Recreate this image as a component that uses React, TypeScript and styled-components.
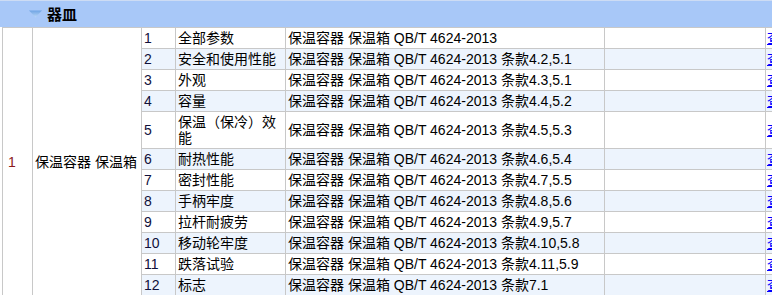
import React from 'react';
import styled, { createGlobalStyle } from 'styled-components';

const GlobalStyle = createGlobalStyle`
  html, body {
    margin: 0;
    padding: 0;
    overflow: hidden;
    background: #ffffff;
  }
  body {
    font-family: "Liberation Sans", "Noto Sans CJK SC", sans-serif;
    font-size: 14px;
    color: #000;
  }
`;

interface Item {
  no: number;
  name: string;
  clause?: string;
}

const items: Item[] = [
  { no: 1, name: '全部参数' },
  { no: 2, name: '安全和使用性能', clause: '4.2,5.1' },
  { no: 3, name: '外观', clause: '4.3,5.1' },
  { no: 4, name: '容量', clause: '4.4,5.2' },
  { no: 5, name: '保温（保冷）效能', clause: '4.5,5.3' },
  { no: 6, name: '耐热性能', clause: '4.6,5.4' },
  { no: 7, name: '密封性能', clause: '4.7,5.5' },
  { no: 8, name: '手柄牢度', clause: '4.8,5.6' },
  { no: 9, name: '拉杆耐疲劳', clause: '4.9,5.7' },
  { no: 10, name: '移动轮牢度', clause: '4.10,5.8' },
  { no: 11, name: '跌落试验', clause: '4.11,5.9' },
  { no: 12, name: '标志', clause: '7.1' },
];

// column widths, left to right
const columns = [30, 109, 34, 110, 319, 161, 60];

const product = '保温容器 保温箱';
const standard = 'QB/T 4624-2013';

const Page = styled.div`
  width: 772px;
  height: 295px;
  overflow: hidden;
`;

const GroupHeader = styled.div`
  height: 26px;
  border-top: 1px solid #cddcf4;
  background: #a8c8f8;
  display: flex;
  align-items: center;
  padding-left: 29px;
  gap: 5px;
`;

const GroupTitle = styled.span`
  font-family: "Liberation Sans", "Noto Sans CJK SC", sans-serif;
  font-size: 15px;
  font-weight: bold;
  color: #000;
  line-height: 16px;
  padding-top: 1px;
`;

const Table = styled.table`
  margin-left: 2px;
  border-collapse: collapse;
  table-layout: fixed;
  width: 823px;
  border-left: 1px solid #a0a0a0;
`;

const Col = styled.col<{ $w: number }>`
  width: ${({ $w }) => $w}px;
`;

const Row = styled.tr<{ $alt: boolean }>`
  background: ${({ $alt }) => ($alt ? '#edf4fd' : '#ffffff')};
`;

const Cell = styled.td`
  border: 1px solid #c8c8c8;
  padding: 2px;
  line-height: 16px;
  vertical-align: middle;
  white-space: normal;
  word-break: break-all;
  overflow: hidden;
`;

const SpanCell = styled(Cell)`
  background: #ffffff;
`;

const IndexCell = styled(SpanCell)`
  color: #8b1a1a;
  padding-left: 5px;
`;

const NumberCell = styled(Cell)`
  color: #10103a;
`;

const StandardCell = styled(Cell)`
  white-space: nowrap;
`;

const LinkCell = styled(Cell)`
  white-space: nowrap;
  padding-left: 1px;
`;

const ViewLink = styled.a`
  color: #0000ff;
  text-decoration: underline;
  cursor: pointer;
`;

const Caret = () => (
  <svg width="13" height="8" viewBox="0 0 13 8">
    <defs>
      <linearGradient id="caretFill" x1="0" y1="0" x2="0" y2="1">
        <stop offset="0" stopColor="#6ea4e4" />
        <stop offset="1" stopColor="#bcd8f6" />
      </linearGradient>
    </defs>
    <polygon points="0,0.5 13,0.5 6.5,7.5" fill="url(#caretFill)" />
  </svg>
);

export default function App() {
  return (
    <Page>
      <GlobalStyle />
      <GroupHeader>
        <Caret />
        <GroupTitle>器皿</GroupTitle>
      </GroupHeader>
      <Table>
        <colgroup>
          {columns.map((w, i) => (
            <Col key={i} $w={w} />
          ))}
        </colgroup>
        <tbody>
          {items.map((item, i) => (
            <Row key={item.no} $alt={i % 2 === 1}>
              {i === 0 && (
                <>
                  <IndexCell rowSpan={items.length}>1</IndexCell>
                  <SpanCell rowSpan={items.length}>{product}</SpanCell>
                </>
              )}
              <NumberCell>{item.no}</NumberCell>
              <Cell>{item.name}</Cell>
              <StandardCell>
                {product} {standard}
                {item.clause ? ` 条款${item.clause}` : ''}
              </StandardCell>
              <Cell />
              <LinkCell>
                <ViewLink>查看</ViewLink>
              </LinkCell>
            </Row>
          ))}
        </tbody>
      </Table>
    </Page>
  );
}
